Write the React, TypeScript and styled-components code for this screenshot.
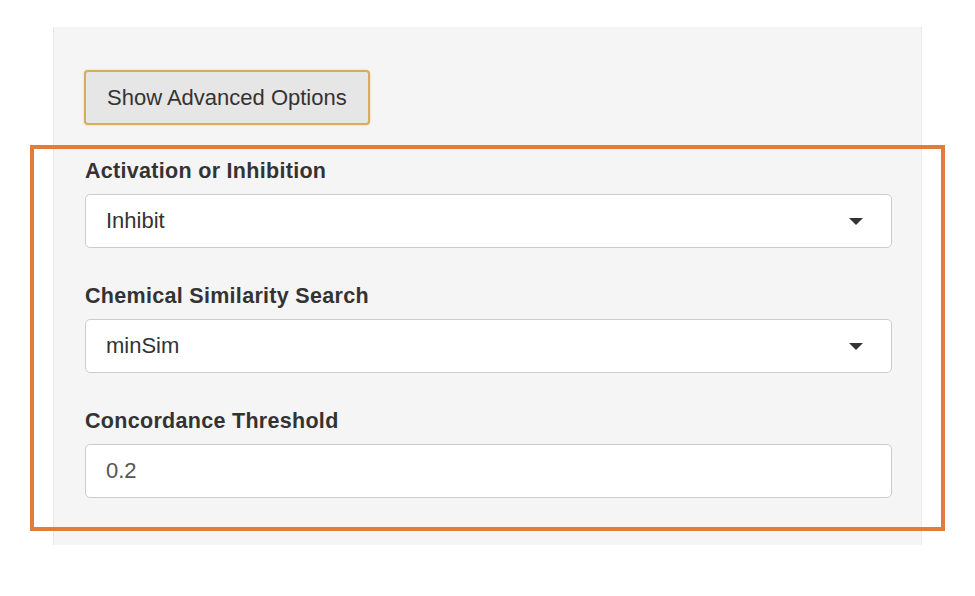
import React from "react";
import styled, { createGlobalStyle } from "styled-components";

const GlobalStyle = createGlobalStyle`
  html, body {
    margin: 0;
    padding: 0;
    background: #ffffff;
  }
  body {
    font-family: "Liberation Sans", Arial, sans-serif;
    color: #333333;
  }
`;

const Page = styled.div`
  position: relative;
  width: 975px;
  height: 596px;
  padding: 27px 0 0 53px;
  box-sizing: border-box;
`;

const Panel = styled.section`
  width: 869px;
  height: 518px;
  box-sizing: border-box;
  background: #f5f5f5;
  border-left: 1px solid #e6e6e6;
  border-right: 1px solid #ececec;
  padding: 43px 29px 0 31px;
  display: flex;
  flex-direction: column;
`;

const ToggleButton = styled.button`
  align-self: flex-start;
  height: 55px;
  margin-left: -1px;
  padding: 0 21px;
  font-family: inherit;
  font-size: 22px;
  color: #333333;
  background: #e6e6e6;
  border: 2px solid #d6ad5c;
  border-radius: 4px;
  box-shadow: 0 0 2px rgba(214, 173, 92, 0.6);
  margin-bottom: 32px;
`;

const FormGroup = styled.div`
  display: flex;
  flex-direction: column;
  margin-bottom: 34px;
`;

const Label = styled.label`
  font-size: 21.5px;
  font-weight: bold;
  letter-spacing: 0.3px;
  line-height: 27px;
  margin-top: 1px;
  margin-bottom: 9px;
  color: #333333;
`;

const Field = styled.div`
  position: relative;
  height: 54px;
  box-sizing: border-box;
  background: #ffffff;
  border: 1px solid #cccccc;
  border-radius: 5px;
  display: flex;
  align-items: center;
  padding: 0 20px;
  font-size: 22px;
  color: #333333;
`;

const FieldText = styled.span<{ $muted?: boolean }>`
  flex: 1;
  color: ${(p) => (p.$muted ? "#555555" : "#333333")};
`;

const Caret = styled.span`
  width: 0;
  height: 0;
  margin-right: 8px;
  border-left: 7px solid transparent;
  border-right: 7px solid transparent;
  border-top: 7px solid #333333;
`;

const Annotation = styled.div`
  position: absolute;
  left: 30px;
  top: 145px;
  width: 915px;
  height: 386px;
  box-sizing: border-box;
  border: 4px solid #e07c3c;
  pointer-events: none;
`;

const SelectField: React.FC<{ label: string; value: string }> = ({ label, value }) => (
  <FormGroup>
    <Label>{label}</Label>
    <Field>
      <FieldText>{value}</FieldText>
      <Caret />
    </Field>
  </FormGroup>
);

const App: React.FC = () => {
  return (
    <>
      <GlobalStyle />
      <Page>
        <Panel>
          <ToggleButton>Show Advanced Options</ToggleButton>
          <SelectField label="Activation or Inhibition" value="Inhibit" />
          <SelectField label="Chemical Similarity Search" value="minSim" />
          <FormGroup>
            <Label>Concordance Threshold</Label>
            <Field>
              <FieldText $muted>0.2</FieldText>
            </Field>
          </FormGroup>
        </Panel>
        <Annotation />
      </Page>
    </>
  );
};

export default App;
